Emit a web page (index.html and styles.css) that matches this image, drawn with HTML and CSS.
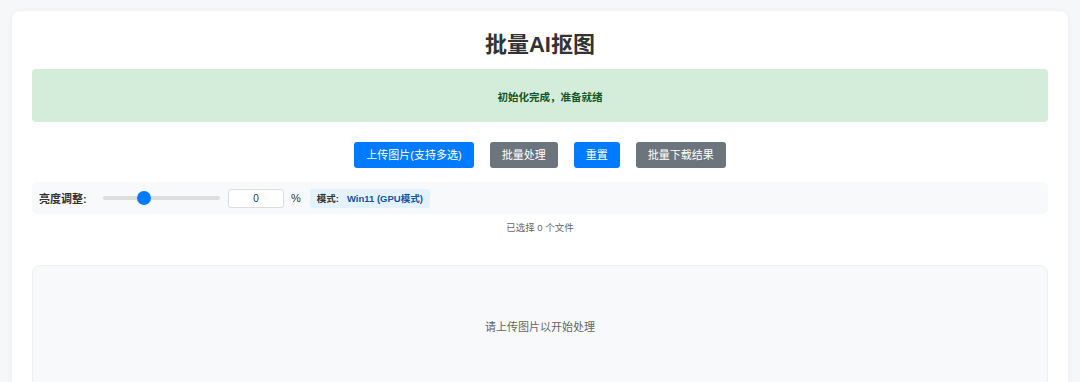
FILE: index.html
```html
<!DOCTYPE html>
<html lang="zh-CN">
<head>
    <meta charset="UTF-8">
    <meta name="viewport" content="width=device-width, initial-scale=1.0">
    <title>批量AI抠图</title>
    <link rel="stylesheet" href="styles.css">
</head>
<body>
    <div class="container">
        <h1>批量AI抠图</h1>

        <div class="status">初始化完成，准备就绪</div>

        <div class="buttons">
            <button class="btn blue">上传图片(支持多选)</button>
            <button class="btn gray">批量处理</button>
            <button class="btn blue">重置</button>
            <button class="btn gray">批量下载结果</button>
        </div>

        <div class="controls">
            <label class="label">亮度调整:</label>
            <input class="slider" type="range" min="-50" max="100" value="0">
            <input class="number" type="text" value="0">
            <span class="unit">%</span>
            <div class="mode">
                <span class="mode-label">模式:</span>
                <span class="mode-value">Win11 (GPU模式)</span>
            </div>
        </div>

        <div class="file-count">已选择 0 个文件</div>

        <div class="preview">
            <p>请上传图片以开始处理</p>
        </div>
    </div>
</body>
</html>
```

FILE: styles.css
```css
* {
    box-sizing: border-box;
    margin: 0;
    padding: 0;
}

body {
    background-color: #f6f7f9;
    font-family: "Liberation Sans", "Noto Sans CJK SC", sans-serif;
    padding: 11px 12px;
}

.container {
    background-color: #fff;
    border-radius: 8px;
    box-shadow: 0 1px 6px rgba(0, 0, 0, 0.06);
    padding: 20px 20px 0;
    min-height: 400px;
}

h1 {
    text-align: center;
    font-size: 22px;
    line-height: 28px;
    color: #333;
    margin-bottom: 10px;
}

.status {
    background-color: #d4edda;
    color: #155724;
    border-radius: 4px;
    text-align: center;
    font-size: 10.5px;
    font-weight: bold;
    line-height: 14px;
    padding: 21px 0 18px 20px;
    margin-bottom: 20px;
}

.buttons {
    display: flex;
    justify-content: center;
    gap: 16px;
}

.btn {
    border: none;
    border-radius: 3px;
    color: #fff;
    font-family: inherit;
    font-size: 11px;
    line-height: 14px;
    padding: 6px 12px;
}

.blue {
    background-color: #007bff;
}

.gray {
    background-color: #6c757d;
}

.controls {
    display: flex;
    align-items: center;
    background-color: #f8f9fa;
    border-radius: 5px;
    height: 32px;
    padding: 0 7px;
    margin-top: 14px;
}

.label {
    font-size: 11px;
    font-weight: bold;
    color: #333;
    width: 64px;
}

.slider {
    -webkit-appearance: none;
    appearance: none;
    width: 117px;
    height: 4px;
    border-radius: 2px;
    background-color: #ddd;
    outline: none;
}

.slider::-webkit-slider-thumb {
    -webkit-appearance: none;
    width: 14px;
    height: 14px;
    border-radius: 50%;
    background-color: #007bff;
}

.number {
    width: 56px;
    height: 19px;
    margin-left: 8px;
    border: 1px solid #ddd;
    border-radius: 3px;
    text-align: center;
    font-family: inherit;
    font-size: 10px;
    color: #333;
}

.unit {
    font-size: 11px;
    color: #333;
    margin-left: 7px;
}

.mode {
    display: flex;
    align-items: center;
    gap: 8px;
    background-color: #e3f2fd;
    border-radius: 3px;
    height: 19px;
    padding: 0 7px;
    margin-left: 9px;
    font-size: 9.5px;
}

.mode-label {
    color: #333;
    font-weight: bold;
}

.mode-value {
    color: #1452a8;
    font-weight: bold;
}

.file-count {
    text-align: center;
    font-size: 9.5px;
    line-height: 12px;
    color: #666;
    margin-top: 8px;
}

.preview {
    background-color: #f8f9fa;
    border: 1px solid #eef0f2;
    border-radius: 8px;
    margin-top: 31px;
    height: 200px;
    text-align: center;
    padding-top: 54px;
}

.preview p {
    font-size: 11px;
    line-height: 14px;
    color: #666;
}
```
